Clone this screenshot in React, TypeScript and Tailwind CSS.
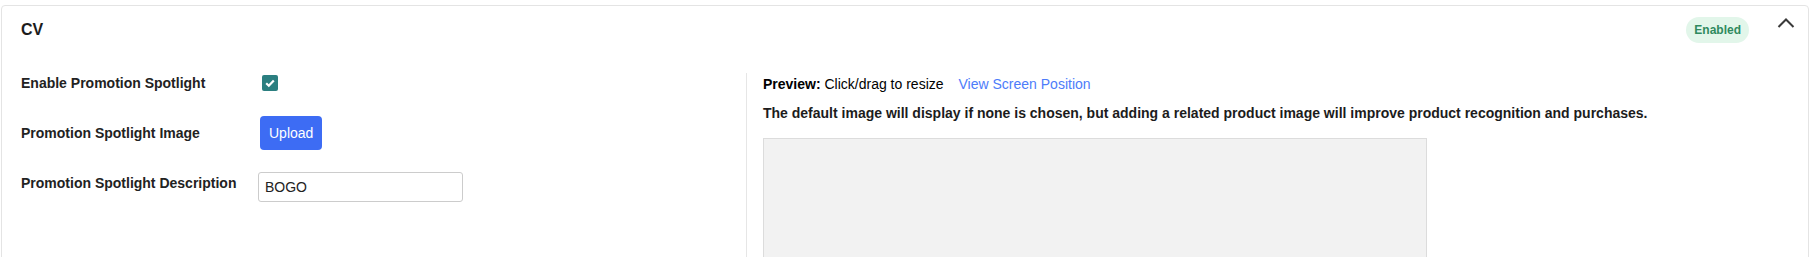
import React, { useState } from 'react';

const ChevronUp = () => (
  <svg width="18" height="12" viewBox="0 0 18 12" fill="none" className="mt-px">
    <path d="M1.5 10 L9 2.5 L16.5 10" stroke="#3a3a3a" strokeWidth="2" />
  </svg>
);

const CheckBox = ({ checked, onChange }: { checked: boolean; onChange: () => void }) => (
  <button
    type="button"
    onClick={onChange}
    className={`ml-1 flex h-4 w-4 items-center justify-center rounded-[2px] ${checked ? 'bg-[#2b7f80]' : 'border border-[#767676] bg-white'}`}
  >
    {checked && (
      <svg width="12" height="12" viewBox="0 0 12 12" fill="none">
        <path d="M2.2 6.3 L4.8 8.8 L9.8 3.4" stroke="white" strokeWidth="2.2" />
      </svg>
    )}
  </button>
);

export default function App() {
  const [enabled, setEnabled] = useState(true);
  const [description, setDescription] = useState('BOGO');

  return (
    <div className="pt-[5px] pl-px pr-[2px] font-['Liberation_Sans',Arial,sans-serif] text-[#222]">
      <div className="rounded-[4px] border border-[#e4e4e4] bg-white">
        {/* Header */}
        <div className="flex items-start justify-between pl-[19px] pr-[13px] pt-[11px]">
          <h2 className="mt-px text-base leading-6 font-bold text-[#1c1c1c]">CV</h2>
          <div className="flex items-start gap-[28px]">
            <span className="flex h-[26px] items-center rounded-[13px] bg-[#e2f6ea] px-[8px] text-xs font-bold text-[#2f8a5e]">
              Enabled
            </span>
            <div className="-mt-px">
              <ChevronUp />
            </div>
          </div>
        </div>

        {/* Content */}
        <div className="mt-[30px] flex">
          {/* Settings */}
          <div className="w-[744px] shrink-0 pl-[19px]">
            <div className="flex h-5 items-center">
              <label className="w-[237px] text-sm leading-5 font-bold">Enable Promotion Spotlight</label>
              <CheckBox checked={enabled} onChange={() => setEnabled(v => !v)} />
            </div>

            <div className="mt-[23px] flex h-[34px] items-center">
              <label className="w-[237px] text-sm leading-5 font-bold">Promotion Spotlight Image</label>
              <button
                type="button"
                className="ml-[2px] h-[34px] rounded-[4px] bg-[#3d6cf4] px-[9px] text-sm text-white"
              >
                Upload
              </button>
            </div>

            <div className="mt-[22px] flex items-start">
              <label className="mt-px w-[237px] text-sm leading-5 font-bold">Promotion Spotlight Description</label>
              <input
                value={description}
                onChange={e => setDescription(e.target.value)}
                className="h-[30px] w-[205px] rounded-[3px] border border-[#cccccc] px-[6px] text-sm text-[#222] outline-none"
              />
            </div>
          </div>

          {/* Preview */}
          <div className="min-h-[190px] flex-1 border-l border-[#e6e6e6] pl-4 pt-px">
            <div className="text-sm leading-5 text-black">
              <span className="font-bold">Preview:</span> Click/drag to resize
              <a className="ml-[15px] cursor-pointer text-[#4d7cfa]">View Screen Position</a>
            </div>
            <p className="mt-[9px] text-sm leading-5 font-bold text-[#1c1c1c]">
              The default image will display if none is chosen, but adding a related product image will improve product recognition and purchases.
            </p>
            <div className="mt-[15px] h-[200px] w-[664px] border border-[#dcdcdc] bg-[#f2f2f2]" />
          </div>
        </div>
      </div>
    </div>
  );
}
